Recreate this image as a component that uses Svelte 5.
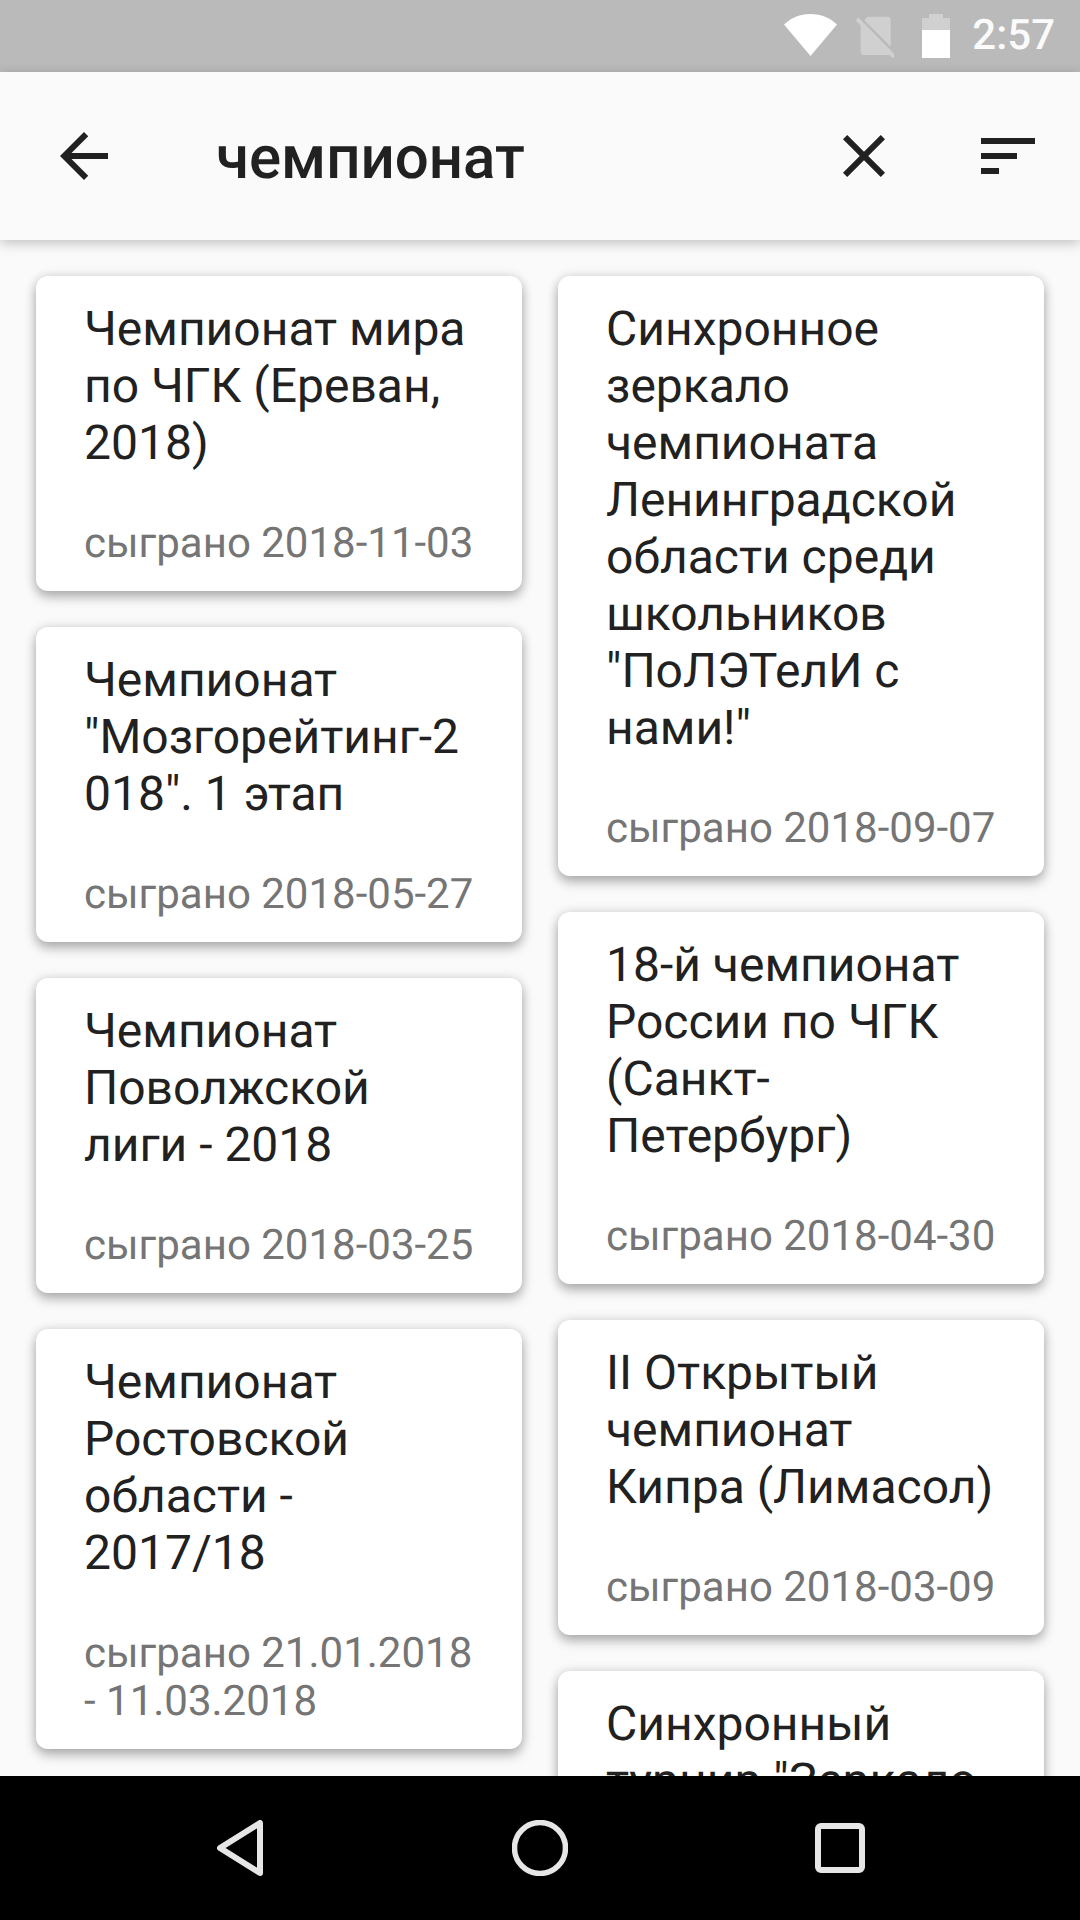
<script>
  const left = [
    { t: 'Чемпионат мира по ЧГК (Ереван, 2018)', d: 'сыграно 2018-11-03' },
    { t: 'Чемпионат "Мозгорейтинг-2018". 1 этап', d: 'сыграно 2018-05-27' },
    { t: 'Чемпионат Поволжской лиги - 2018', d: 'сыграно 2018-03-25' },
    { t: 'Чемпионат Ростовской области - 2017/18', d: 'сыграно 21.01.2018 - 11.03.2018' }
  ];
  const right = [
    { t: 'Синхронное зеркало чемпионата Ленинградской области среди школьников "ПоЛЭТелИ с нами!"', d: 'сыграно 2018-09-07' },
    { t: '18-й чемпионат России по ЧГК (Санкт-Петербург)', d: 'сыграно 2018-04-30' },
    { t: 'II Открытый чемпионат Кипра (Лимасол)', d: 'сыграно 2018-03-09' },
    { t: 'Синхронный турнир "Зеркало чемпионата"', d: 'сыграно 2018-02-11' }
  ];
</script>

<div class="screen">
  <div class="status">
    <svg class="wifi" viewBox="0 0 53 42" width="53" height="42"><path d="M0 10.500C7 4 16 0 26.500 0S46 4 53 10.500L26.500 42z" fill="#fff"/></svg>
    <svg class="sim" viewBox="0 0 38 42" width="38" height="42">
      <path d="M11.500 .7H31.700a3 3 0 0 1 3 3V39H7.700a3 3 0 0 1-3-3V8z" fill="#d0d0d0"/>
      <path d="M3 1L41 39" stroke="#bababa" stroke-width="3" fill="none"/>
      <path d="M1 3L38 40.700" stroke="#d0d0d0" stroke-width="4" fill="none"/>
    </svg>
    <svg class="batt" viewBox="0 0 28 44" width="28" height="44">
      <path d="M7 0h14v4h7v12H0V4h7z" fill="#d0d0d0"/>
      <path d="M0 16h28v28H0z" fill="#fff"/>
    </svg>
    <span class="time">2:57</span>
  </div>

  <header class="bar">
    <button class="icon back" aria-label="Назад">
      <svg viewBox="0 0 24 24" width="72" height="72"><path d="M20 11H7.830l5.590-5.590L12 4l-8 8 8 8 1.410-1.410L7.830 13H20v-2z"/></svg>
    </button>
    <h1>чемпионат</h1>
    <button class="icon close" aria-label="Очистить">
      <svg viewBox="0 0 24 24" width="72" height="72"><path d="M19 6.410L17.590 5 12 10.590 6.410 5 5 6.410 10.590 12 5 17.590 6.410 19 12 13.410 17.590 19 19 17.590 13.410 12z"/></svg>
    </button>
    <button class="icon sort" aria-label="Сортировка">
      <svg viewBox="0 0 24 24" width="72" height="72"><path d="M3 18h6v-2H3v2zM3 6v2h18V6H3zm0 7h12v-2H3v2z"/></svg>
    </button>
  </header>

  <main class="list">
    <div class="col">
      {#each left as c}
        <article class="card">
          <div class="title">{c.t}</div>
          <div class="date">{c.d}</div>
        </article>
      {/each}
    </div>
    <div class="col">
      {#each right as c}
        <article class="card">
          <div class="title">{c.t}</div>
          <div class="date">{c.d}</div>
        </article>
      {/each}
    </div>
  </main>

  <nav class="nav">
    <svg viewBox="0 0 46 56" width="46" height="56"><path d="M43 3V53L3 28z" fill="none" stroke="#e6e6e6" stroke-width="6" stroke-linejoin="round"/></svg>
    <svg viewBox="0 0 56 56" width="56" height="56"><circle cx="28" cy="28" r="25.500" fill="none" stroke="#e6e6e6" stroke-width="5.500"/></svg>
    <svg viewBox="0 0 50 50" width="50" height="50"><rect x="3" y="3" width="44" height="44" rx="3" fill="none" stroke="#e6e6e6" stroke-width="6"/></svg>
  </nav>
</div>

<style>
  :global(body) { margin: 0; background: #fafafa; }
  .screen {
    width: 1080px;
    height: 1920px;
    display: flex;
    flex-direction: column;
    overflow: hidden;
    background: #fafafa;
    font-family: Roboto, "Liberation Sans", sans-serif;
    text-rendering: geometricPrecision;
  }
  .status {
    height: 72px;
    flex: none;
    background: #bababa;
    display: flex;
    align-items: center;
    padding-right: 25px;
    justify-content: flex-end;
  }
  .wifi { margin-right: 19px; margin-top: -2px; }
  .sim { margin-right: 28px; margin-top: 2px; }
  .batt { margin-right: 22px; }
  .time { color: #fff; font-size: 42px; font-weight: 500; line-height: 72px; opacity: 0.95; }

  .bar {
    height: 168px;
    flex: none;
    display: flex;
    align-items: center;
    background: #fafafa;
    position: relative;
    z-index: 2;
    box-shadow: 0 3px 12px rgba(0, 0, 0, 0.24);
  }
  .icon {
    width: 72px;
    height: 72px;
    padding: 0;
    border: 0;
    background: none;
    flex: none;
  }
  .icon svg { display: block; fill: #212121; }
  .back { margin-left: 48px; }
  h1 {
    margin: 3px 0 0 96px;
    flex: 1;
    font-size: 60px;
    font-weight: 500;
    color: #212121;
    line-height: 72px;
  }
  .close { margin-right: 72px; }
  .sort { margin-right: 36px; }

  .list {
    flex: 1;
    min-height: 0;
    overflow: hidden;
    display: flex;
    gap: 36px;
    padding: 36px 36px 0;
  }
  .col {
    width: 486px;
    flex: none;
    display: flex;
    flex-direction: column;
    gap: 36px;
  }
  .card {
    flex: none;
    box-sizing: border-box;
    background: #fff;
    border-radius: 12px;
    padding: 24px 48px 23px;
    box-shadow: 0 6px 12px rgba(0, 0, 0, 0.28), 0 0 12px rgba(0, 0, 0, 0.12);
  }
  .title {
    font-size: 48px;
    line-height: 57px;
    color: #212121;
    overflow-wrap: anywhere;
  }
  .date {
    margin-top: 49px;
    font-size: 42px;
    line-height: 48px;
    color: #757575;
  }

  .nav {
    height: 144px;
    flex: none;
    background: #000;
    position: relative;
    z-index: 3;
    display: grid;
    grid-template-columns: repeat(3, 1fr);
    align-items: center;
    justify-items: center;
    padding: 0 90px;
  }
</style>
